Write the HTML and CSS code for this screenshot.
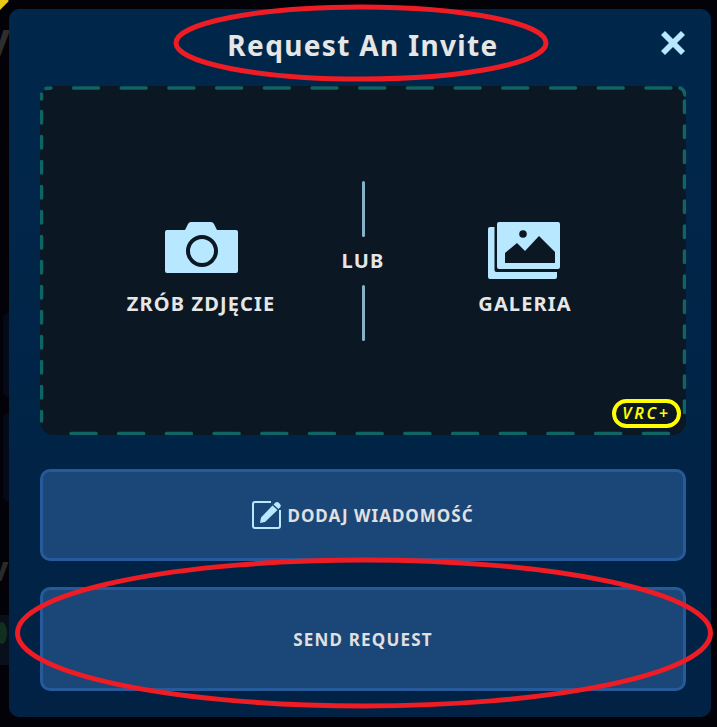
FILE: index.html
```html
<!DOCTYPE html>
<html lang="pl">
<head>
<meta charset="utf-8">
<title>Request An Invite</title>
<link rel="stylesheet" href="styles.css">
</head>
<body>
<div class="backdrop">
  <span class="bg-star"></span>
  <span class="bg-y">y</span>
  <span class="bg-card bg-card-a"></span>
  <span class="bg-card bg-card-b"></span>
  <span class="bg-v">v</span>
  <span class="bg-panel"></span>
  <span class="bg-green"></span>
</div>
<main class="modal">
  <header class="head">
    <h1 class="title">Request An Invite</h1>
    <button class="close" aria-label="Zamknij">
      <svg viewBox="0 0 26 26" width="26" height="26"><path class="ic" d="M5 1 13 9 21 1 25 5 17 13 25 21 21 25 13 17 5 25 1 21 9 13 1 5Z"/></svg>
    </button>
  </header>
  <section class="drop">
    <svg class="dash" viewBox="0 0 646 349">
      <path d="M6 2.500Q8 2 11 2M1.500 8Q1.500 10 1.500 13M640 2Q644 3 645 9"/>
      <path class="dash-top" d="M33.500 2H632"/>
      <path class="dash-bottom" d="M31 347.500H637"/>
      <path class="dash-left" d="M1.500 25.500V335"/>
      <path class="dash-right" d="M644.500 15V330"/>
    </svg>
    <div class="option opt-cam">
      <svg viewBox="0 0 73 52" width="73" height="52">
        <path class="ic" d="M2 8H20L23 2Q24 0 26 0H46Q48 0 49 2L52 8H71Q73 8 73 10V49Q73 51 71 51H2Q0 51 0 49V10Q0 8 2 8Z"/>
        <circle cx="37" cy="29" r="14" fill="none" stroke="#0b1722" stroke-width="4"/>
      </svg>
      <span class="opt-label">ZRÓB ZDJĘCIE</span>
    </div>
    <div class="divider">
      <span class="rule"></span>
      <span class="lub">LUB</span>
      <span class="rule"></span>
    </div>
    <div class="option opt-gal">
      <svg viewBox="0 0 72 58" width="72" height="58">
        <path class="ic" d="M2 5H6.500V48Q6.500 50 8.500 50H69V55Q69 57 67 57H2Q0 57 0 55V7Q0 5 2 5Z"/>
        <path class="ic" fill-rule="evenodd" d="M11 0H70Q72 0 72 2V45Q72 47 70 47H11Q9 47 9 45V2Q9 0 11 0ZM17 41H67V30L51 14 37 29 29 21 17 31Z"/>
        <circle cx="35" cy="12" r="3.800" fill="#0b1722"/>
      </svg>
      <span class="opt-label">GALERIA</span>
    </div>
    <span class="vrc">VRC+</span>
  </section>
  <button class="action action-msg">
    <svg viewBox="0 0 29 28" width="29" height="28">
      <path class="ic-line" d="M19 1H3Q1 1 1 3V25Q1 27 3 27H26Q28 27 28 25V9"/>
      <path class="ic" d="M23 2 Q25 0 27 2L28 3Q29.500 5 28 6.500L26.500 8 21.500 3.500ZM20.500 4.500 25.500 9 13 21 8 22 9 16.500Z"/>
    </svg>
    <span>DODAJ WIADOMOŚĆ</span>
  </button>
  <button class="action action-send">SEND REQUEST</button>
</main>
<svg class="marks" viewBox="0 0 717 727">
  <ellipse cx="361" cy="43" rx="185" ry="36"/>
  <ellipse cx="364" cy="633" rx="346.500" ry="73"/>
</svg>
</body>
</html>
```

FILE: styles.css
```css
* { box-sizing: border-box; }
html, body { margin: 0; height: 100%; }
body {
  background: #020208;
  font-family: "Noto Sans", "Open Sans", sans-serif;
  overflow: hidden;
  position: relative;
  width: 717px;
  height: 727px;
}
.backdrop { position: absolute; inset: 0; }
.bg-star {
  position: absolute; left: -8px; top: -6px;
  width: 14px; height: 14px;
  background: #e8c81a;
  transform: rotate(45deg);
}
.bg-y {
  position: absolute; left: -14px; top: 12px;
  font-size: 42px; line-height: 50px; font-weight: 700;
  color: #2e2e2e;
}
.bg-card {
  position: absolute; left: 3px;
  width: 12px;
  border-radius: 6px 0 0 6px;
  background: #040a1a;
}
.bg-card-a { top: 313px; height: 84px; }
.bg-card-b { top: 413px; height: 89px; }
.bg-v {
  position: absolute; left: -11px; top: 546px;
  font-size: 34px; line-height: 44px; font-weight: 700;
  color: #2a2a2a;
}
.bg-panel {
  position: absolute; left: 0; top: 615px;
  width: 9px; height: 50px;
  background: #0a0f1c;
}
.bg-green {
  position: absolute; left: -3px; top: 622px;
  width: 10px; height: 22px;
  border-radius: 50%;
  background: #11301f;
}
.modal {
  position: absolute;
  left: 9px; top: 9px;
  width: 702px; height: 708px;
  padding: 0 25px 0 31px;
  border-radius: 10px;
  background: linear-gradient(#00274a, #012244);
  display: flex;
  flex-direction: column;
}
.head {
  height: 77px;
  flex: none;
  padding-bottom: 6px;
  display: flex;
  align-items: center;
  justify-content: center;
  position: relative;
}
.title {
  margin: 0;
  font-size: 28px;
  line-height: 36px;
  font-weight: 700;
  letter-spacing: 1.350px;
  color: #e6e6e6;
}
.close {
  position: absolute;
  right: 0; top: 21px;
  width: 26px; height: 26px;
  padding: 0;
  border: 0;
  background: none;
  display: block;
}
.close svg { display: block; }
.ic { fill: #b8e8ff; }
.ic-line { fill: none; stroke: #b8e8ff; stroke-width: 2; }
.drop {
  position: relative;
  flex: none;
  height: 349px;
  border-radius: 14px;
  background: #0b1722;
}
.dash {
  position: absolute; inset: 0;
  width: 100%; height: 100%;
}
.dash path {
  fill: none;
  stroke: #0f6464;
  stroke-width: 3.500;
  stroke-linecap: round;
}
.dash .dash-top, .dash .dash-bottom { stroke-dasharray: 25 22.700; }
.dash .dash-left, .dash .dash-right { stroke-dasharray: 11.500 13.500; }
.option {
  position: absolute;
  top: 136px;
  display: flex;
  flex-direction: column;
  align-items: center;
  width: 200px;
}
.opt-cam { left: 61px; gap: 17px; }
.opt-gal { left: 385px; gap: 11px; }
.opt-gal svg { margin-right: 2px; }
.opt-label, .lub {
  font-size: 20px;
  line-height: 26px;
  font-weight: 700;
  letter-spacing: 1.150px;
  color: #e6e6e6;
}
.divider {
  position: absolute;
  left: 293px; top: 95px;
  width: 60px; height: 160px;
  display: flex;
  flex-direction: column;
  align-items: center;
  justify-content: space-between;
}
.rule {
  width: 3px; height: 56px;
  border-radius: 2px;
  background: #86b2c8;
}
.vrc {
  position: absolute;
  right: 5px; bottom: 7px;
  width: 69px; height: 29px;
  border: 4px solid #ffff00;
  border-radius: 15px;
  background: #0b1722;
  color: #ffff00;
  font-size: 16px;
  line-height: 21px;
  font-weight: 600;
  font-style: italic;
  letter-spacing: 2.700px;
  text-align: center;
}
.action {
  flex: none;
  width: 100%;
  border: 3px solid #265a9a;
  border-radius: 10px;
  background: #1b4678;
  color: #e0e0e0;
  font-family: inherit;
  font-weight: 700;
  display: flex;
  align-items: center;
  justify-content: center;
}
.action-msg {
  height: 92px;
  margin-top: 34px;
  gap: 6px;
  font-size: 17px;
  letter-spacing: 1px;
}
.action-msg svg { flex: none; }
.action-send {
  height: 104px;
  margin-top: 26px;
  font-size: 17px;
  letter-spacing: 1.200px;
}
.marks {
  position: absolute; inset: 0;
  width: 717px; height: 727px;
  pointer-events: none;
}
.marks ellipse {
  fill: none;
  stroke: #ee1c25;
  stroke-width: 5;
}
```
